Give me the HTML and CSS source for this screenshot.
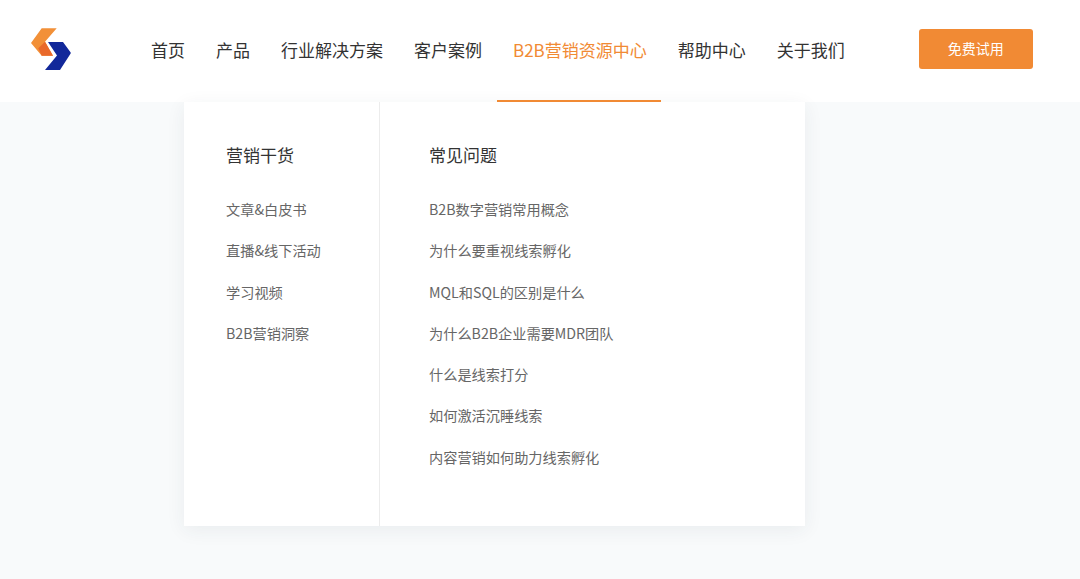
FILE: index.html
```html
<!DOCTYPE html>
<html lang="zh-CN">
<head>
    <meta charset="UTF-8">
    <title>B2B营销资源中心</title>
    <link rel="stylesheet" href="styles.css">
</head>
<body>
    <header class="site-header">
        <a class="logo" href="#">
            <svg width="42" height="44" viewBox="0 0 42 44">
                <path d="M11.7 1.3H26.7L15 14.7L23 28.7H11.7L1 16Z" fill="#f29038"/>
                <path d="M15 14.7L8.3 21.3L11.7 28.7H23Z" fill="#e9692b"/>
                <path d="M18 15H33L40.7 25.5Q41 26.5 40 27.5L30 43H15L27 28.5Z" fill="#12289a"/>
            </svg>
        </a>
        <nav class="main-nav">
            <a href="#">首页</a>
            <a href="#">产品</a>
            <a href="#">行业解决方案</a>
            <a href="#">客户案例</a>
            <a class="active" href="#">B2B营销资源中心</a>
            <a href="#">帮助中心</a>
            <a href="#">关于我们</a>
        </nav>
        <a class="trial-btn" href="#">免费试用</a>
    </header>

    <main class="page-body">
        <div class="dropdown">
            <section class="col col-left">
                <h3>营销干货</h3>
                <ul>
                    <li>文章&amp;白皮书</li>
                    <li>直播&amp;线下活动</li>
                    <li>学习视频</li>
                    <li>B2B营销洞察</li>
                </ul>
            </section>
            <section class="col col-right">
                <h3>常见问题</h3>
                <ul>
                    <li>B2B数字营销常用概念</li>
                    <li>为什么要重视线索孵化</li>
                    <li>MQL和SQL的区别是什么</li>
                    <li>为什么B2B企业需要MDR团队</li>
                    <li>什么是线索打分</li>
                    <li>如何激活沉睡线索</li>
                    <li>内容营销如何助力线索孵化</li>
                </ul>
            </section>
        </div>
    </main>
</body>
</html>
```

FILE: styles.css
```css
* {
    box-sizing: border-box;
}

html, body {
    height: 100%;
}

body {
    margin: 0;
    overflow: hidden;
    background: #f8fafb;
    font-family: "Noto Sans CJK SC", "Noto Sans", sans-serif;
}

a {
    text-decoration: none;
    color: inherit;
}

.site-header {
    display: flex;
    align-items: center;
    height: 102px;
    padding-left: 30px;
    background: #fff;
}

.logo {
    display: flex;
    width: 42px;
    height: 44px;
    margin-top: -4px;
}

.main-nav {
    display: flex;
    align-items: center;
    gap: 31px;
    margin-left: 79px;
    margin-top: -4px;
    font-size: 17px;
    color: #333;
}

.main-nav a {
    position: relative;
    white-space: nowrap;
}

.main-nav .active {
    color: #f18a34;
}

/* underline runs wider than the label, down to the header edge */
.main-nav .active::after {
    content: "";
    position: absolute;
    left: -16px;
    right: -14px;
    top: 63px;
    height: 2px;
    background: #f18a34;
}

.trial-btn {
    display: flex;
    align-items: center;
    justify-content: center;
    width: 114px;
    height: 40px;
    margin-left: 74px;
    margin-top: -4px;
    padding-bottom: 2px;
    border-radius: 3px;
    background: #f18a34;
    color: #fff;
    font-size: 14px;
}

.page-body {
    padding-left: 184px;
}

.dropdown {
    display: flex;
    width: 621px;
    height: 424px;
    background: #fff;
    box-shadow: 0 4px 18px rgba(40, 50, 70, 0.07);
}

.col {
    padding-top: 40px;
}

.col-left {
    width: 196px;
    padding-left: 42px;
    border-right: 1px solid #ececec;
}

.col-right {
    flex: 1;
    padding-left: 49px;
}

.col h3 {
    margin: 0 0 21px;
    font-size: 17px;
    font-weight: 400;
    line-height: 26px;
    color: #333;
}

.col ul {
    margin: 0;
    padding: 0;
    list-style: none;
}

.col li {
    height: 41.3px;
    font-size: 14.2px;
    line-height: 41.3px;
    color: #666;
    white-space: nowrap;
}
```
